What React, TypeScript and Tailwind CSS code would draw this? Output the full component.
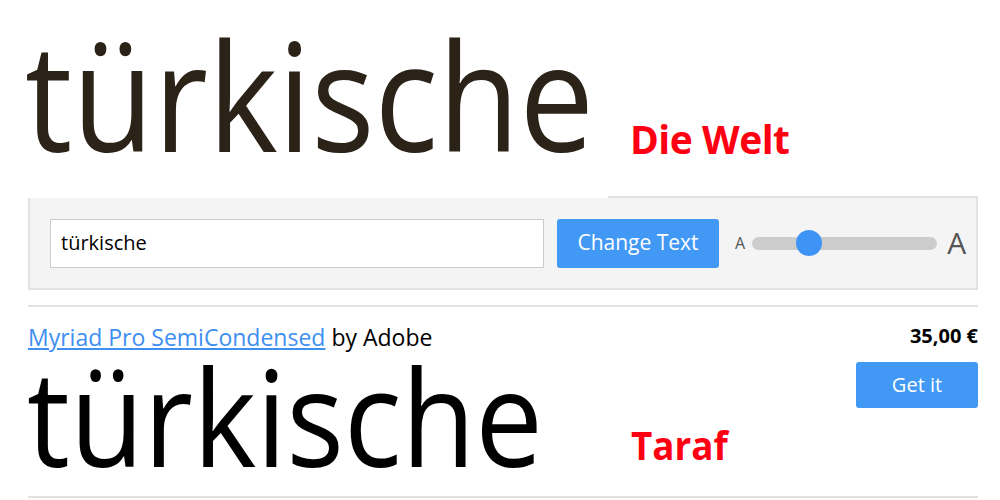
import { useState } from "react";

export default function App() {
  const [text] = useState("türkische");

  return (
    <div className="w-[1000px] h-[500px] bg-white overflow-hidden font-['Open_Sans',sans-serif]">
      {/* header picture + caption */}
      <div className="relative z-10 -mb-[2px] flex h-[198px]">
        <div className="w-[608px] h-full bg-white pl-[25px] pt-[19px]">
          <div className="text-[150px] leading-none text-[#2b2218] scale-x-[0.885] origin-left whitespace-nowrap">
            {text}
          </div>
        </div>
        <div className="pl-[22px] pt-[119px] text-[39px] leading-none font-bold text-[#ff0012] tracking-[-0.5px] whitespace-nowrap">
          Die Welt
        </div>
      </div>

      {/* controls */}
      <div className="ml-[28px] w-[950px] h-[94px] border-2 border-[#e2e2e2] bg-[#f4f4f4] flex items-center pl-[20px]">
        <div className="w-[494px] h-[49px] border border-[#cccccc] bg-white flex items-center px-[10px] text-[20px] font-medium text-black">
          {text}
        </div>
        <button className="ml-[13px] w-[162px] h-[49px] rounded-[3px] bg-[#4199f5] text-white text-[21px] font-medium">
          Change Text
        </button>
        <div className="ml-[16px] flex items-center">
          <span className="text-[16px] text-[#555] leading-none font-medium">A</span>
          <div className="relative ml-[7px] w-[185px] h-[13px] rounded-full bg-[#cccccc]">
            <div className="absolute left-[44px] -top-[7px] w-[26px] h-[26px] rounded-full bg-[#3d94f5]" />
          </div>
          <span className="ml-[10px] text-[30px] text-[#555] leading-none">A</span>
        </div>
      </div>

      <div className="ml-[28px] w-[950px] mt-[15px] border-t-2 border-[#e2e2e2]" />

      {/* font result */}
      <div className="ml-[28px] w-[950px] h-[189px] flex justify-between">
        <div className="flex flex-col">
          <div className="mt-[19px] text-[23px] leading-none whitespace-nowrap">
            <a href="#" className="text-[#3d8ff0] underline">
              Myriad Pro SemiCondensed
            </a>{" "}
            <span className="text-black">by Adobe</span>
          </div>
          <div className="flex items-end">
            <div className="w-[604px] -ml-[1px] text-[133px] leading-none text-black whitespace-nowrap">
              <div className="scale-x-[0.905] origin-left">{text}</div>
            </div>
            <div className="mb-[17px] text-[40px] leading-none font-bold text-[#ff0012] whitespace-nowrap">
              <div className="scale-x-[0.92] origin-left">Taraf</div>
            </div>
          </div>
        </div>
        <div className="flex flex-col items-end">
          <div className="mt-[19px] text-[20px] font-bold text-black leading-none">35,00 €</div>
          <button className="mt-[16px] w-[122px] h-[46px] rounded-[3px] bg-[#4199f5] text-white text-[20px] font-medium">
            Get it
          </button>
        </div>
      </div>

      <div className="ml-[28px] w-[950px] border-t-2 border-[#e2e2e2]" />
    </div>
  );
}
